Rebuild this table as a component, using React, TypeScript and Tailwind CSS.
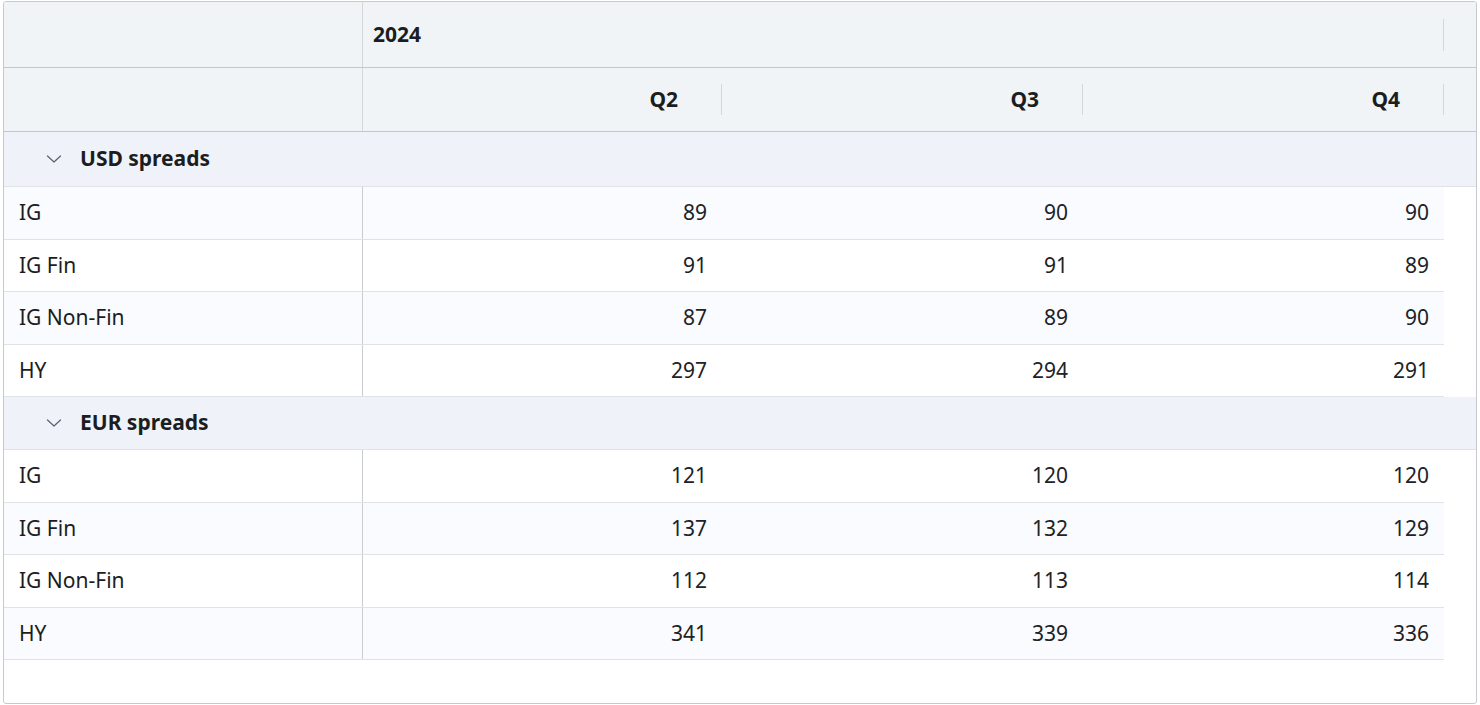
import React from 'react';

type Row = { label: string; values: number[] };
type Group = { title: string; rows: Row[] };

const groups: Group[] = [
  {
    title: 'USD spreads',
    rows: [
      { label: 'IG', values: [89, 90, 90] },
      { label: 'IG Fin', values: [91, 91, 89] },
      { label: 'IG Non-Fin', values: [87, 89, 90] },
      { label: 'HY', values: [297, 294, 291] },
    ],
  },
  {
    title: 'EUR spreads',
    rows: [
      { label: 'IG', values: [121, 120, 120] },
      { label: 'IG Fin', values: [137, 132, 129] },
      { label: 'IG Non-Fin', values: [112, 113, 114] },
      { label: 'HY', values: [341, 339, 336] },
    ],
  },
];

const quarters = ['Q2', 'Q3', 'Q4'];

function Chevron() {
  return (
    <svg width="16" height="16" viewBox="0 0 16 16" fill="none" className="text-[#5f6670]">
      <path d="M1.5 5 8 11 14.5 5" stroke="currentColor" strokeWidth="1.3" strokeLinecap="round" strokeLinejoin="round" />
    </svg>
  );
}

export default function App() {
  let idx = 0;
  return (
    <div className="w-[1480px] h-[705px] bg-white pt-px pl-[3px]" style={{ fontFamily: '"Noto Sans", "Open Sans", sans-serif' }}>
      <div className="w-[1474px] h-[703px] border border-[#c6cacf] rounded-[3px] overflow-hidden bg-white text-[#1b1d21]">
        {/* header */}
        <div className="bg-[#f1f4f7]">
          <div className="flex h-[66px] border-b border-[#c4c8cc]">
            <div className="w-[359px] h-full border-r border-[#d3d7db]" />
            <div className="w-[1081px] h-full flex items-center pl-[10px] relative">
              <span className="text-[21px] font-bold">2024</span>
              <span className="absolute right-0 top-[17px] h-[32px] w-px bg-[#d3d7db]" />
            </div>
          </div>
          <div className="flex h-[64px] border-b border-[#c4c8cc]">
            <div className="w-[359px] h-full border-r border-[#d3d7db]" />
            {quarters.map((q, i) => (
              <div key={q} className={`${i === 0 ? 'w-[359px]' : 'w-[361px]'} h-full flex items-center justify-end pr-[44px] relative`}>
                <span className="text-[21px] font-bold">{q}</span>
                <span className="absolute right-0 top-[16px] h-[31px] w-px bg-[#d3d7db]" />
              </div>
            ))}
          </div>
        </div>

        {/* body */}
        {groups.map((g) => {
          const groupIdx = idx++;
          return (
            <div key={g.title}>
              <div className={`flex items-center bg-[#eff3f9] border-b border-[#dfe2e6] ${groupIdx === 0 ? 'h-[55px]' : 'h-[53px]'}`}>
                <div className="pl-[42px] pr-[18px] flex items-center">
                  <Chevron />
                </div>
                <span className="text-[21px] font-bold">{g.title}</span>
              </div>
              {g.rows.map((r) => {
                const i = idx++;
                return (
                  <div
                    key={r.label}
                    className={`flex w-[1440px] h-[52.5px] border-b border-[#dfe2e6] ${i % 2 === 1 ? 'bg-[#f9fbfe]' : 'bg-white'}`}
                  >
                    <div className="w-[359px] h-full border-r border-[#c9cdd1] flex items-center pl-[15px] text-[21px]">
                      {r.label}
                    </div>
                    {r.values.map((v, j) => (
                      <div
                        key={j}
                        className={`${j === 0 ? 'w-[359px]' : 'w-[361px]'} h-full flex items-center justify-end pr-[15px] text-[21px] text-[#202226]`}
                      >
                        {v}
                      </div>
                    ))}
                  </div>
                );
              })}
            </div>
          );
        })}
      </div>
    </div>
  );
}
